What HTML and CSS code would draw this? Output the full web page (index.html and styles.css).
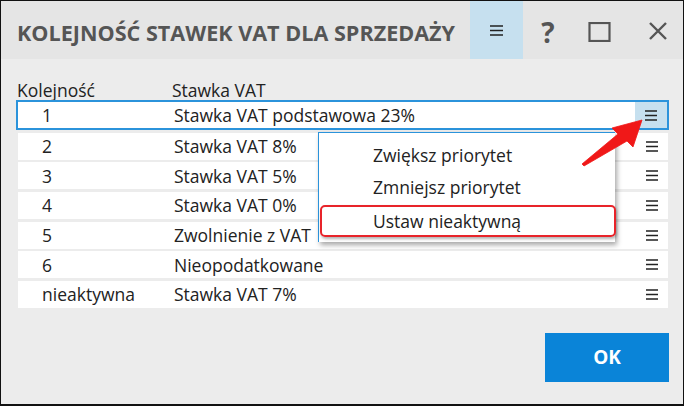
FILE: index.html
```html
<!DOCTYPE html>
<html lang="pl">
<head>
<meta charset="utf-8">
<link rel="stylesheet" href="styles.css">
</head>
<body>
<div class="window">
  <div class="titlebar">
    <div class="title">KOLEJNOŚĆ STAWEK VAT DLA SPRZEDAŻY</div>
    <div class="tb-btn tb-menu">
      <svg width="13" height="11" viewBox="0 0 13 11"><path d="M0 1h13M0 5.5h13M0 10h13" stroke="#222" stroke-width="1.6"/></svg>
    </div>
    <div class="tb-btn tb-help">?</div>
    <div class="tb-btn tb-max">
      <svg width="24" height="20" viewBox="0 0 24 20"><rect x="1.5" y="1" width="20" height="18" fill="none" stroke="#555" stroke-width="2.2"/></svg>
    </div>
    <div class="tb-btn tb-close">
      <svg width="20" height="18" viewBox="0 0 20 18"><path d="M2 1L18 17M18 1L2 17" stroke="#555" stroke-width="2.4"/></svg>
    </div>
  </div>
  <div class="content">
    <div class="thead">
      <div class="c-order">Kolejność</div>
      <div class="c-rate">Stawka VAT</div>
    </div>
    <div class="rows">
      <div class="row selected"><div class="c-num">1</div><div class="c-name">Stawka VAT podstawowa 23%</div><div class="c-menu active"><svg class="ham" width="12" height="11" viewBox="0 0 12 11"><path d="M0 1h12M0 5.5h12M0 10h12" stroke="#222" stroke-width="1.7"/></svg></div></div>
      <div class="row"><div class="c-num">2</div><div class="c-name">Stawka VAT 8%</div><div class="c-menu"><svg class="ham" width="12" height="11" viewBox="0 0 12 11"><path d="M0 1h12M0 5.5h12M0 10h12" stroke="#222" stroke-width="1.7"/></svg></div></div>
      <div class="row"><div class="c-num">3</div><div class="c-name">Stawka VAT 5%</div><div class="c-menu"><svg class="ham" width="12" height="11" viewBox="0 0 12 11"><path d="M0 1h12M0 5.5h12M0 10h12" stroke="#222" stroke-width="1.7"/></svg></div></div>
      <div class="row"><div class="c-num">4</div><div class="c-name">Stawka VAT 0%</div><div class="c-menu"><svg class="ham" width="12" height="11" viewBox="0 0 12 11"><path d="M0 1h12M0 5.5h12M0 10h12" stroke="#222" stroke-width="1.7"/></svg></div></div>
      <div class="row"><div class="c-num">5</div><div class="c-name">Zwolnienie z VAT</div><div class="c-menu"><svg class="ham" width="12" height="11" viewBox="0 0 12 11"><path d="M0 1h12M0 5.5h12M0 10h12" stroke="#222" stroke-width="1.7"/></svg></div></div>
      <div class="row"><div class="c-num">6</div><div class="c-name">Nieopodatkowane</div><div class="c-menu"><svg class="ham" width="12" height="11" viewBox="0 0 12 11"><path d="M0 1h12M0 5.5h12M0 10h12" stroke="#222" stroke-width="1.7"/></svg></div></div>
      <div class="row"><div class="c-num">nieaktywna</div><div class="c-name">Stawka VAT 7%</div><div class="c-menu"><svg class="ham" width="12" height="11" viewBox="0 0 12 11"><path d="M0 1h12M0 5.5h12M0 10h12" stroke="#222" stroke-width="1.7"/></svg></div></div>
    </div>
    <div class="footer">
      <button class="ok">OK</button>
    </div>

    <div class="ctx">
      <div class="ctx-item">Zwiększ priorytet</div>
      <div class="ctx-item">Zmniejsz priorytet</div>
      <div class="ctx-item marked">Ustaw nieaktywną</div>
    </div>

    <svg class="arrow" width="66" height="58" viewBox="0 0 66 58">
      <path d="M2 53 L38 23 L32 17 L62 9 L53 36 L47 30 L4 55 Z" fill="#f01818" stroke="#f01818" stroke-width="0.8" stroke-linejoin="round"/>
    </svg>
  </div>
</div>
</body>
</html>
```

FILE: styles.css
```css
* { box-sizing: border-box; }
html, body { margin: 0; padding: 0; }
body {
  width: 684px;
  height: 406px;
  font-family: "Open Sans", "Noto Sans", sans-serif;
  color: #222;
  background: #fff;
}
.window {
  width: 684px;
  height: 406px;
  border: 1px solid #111;
  border-bottom-width: 2px;
  background: #ececec;
  display: flex;
  flex-direction: column;
}
.titlebar {
  height: 58px;
  background: #e5e5e5;
  display: flex;
  align-items: stretch;
}
.title {
  flex: 1;
  padding-left: 16px;
  display: flex;
  align-items: center;
  padding-top: 5px;
  font-weight: 700;
  font-size: 21.6px;
  color: #555;
  white-space: nowrap;
}
.tb-btn {
  display: flex;
  align-items: center;
  justify-content: center;
  color: #555;
}
.tb-menu { width: 53px; background: #c6e0ef; }
.tb-help { width: 50px; font-size: 28px; font-weight: 700; color: #555; padding-top: 4px; }
.tb-max { width: 55px; padding-top: 4px; padding-right: 2px; }
.tb-close { width: 55px; padding-left: 5px; padding-top: 2px; }
.content {
  flex: 1;
  position: relative;
  padding: 13px 14px 0 15px;
}
.thead {
  display: flex;
  height: 28px;
  align-items: flex-end;
  line-height: 20px;
  font-size: 17.5px;
  color: #222;
}
.thead .c-order { width: 156px; padding-left: 1px; }
.rows {
  display: flex;
  flex-direction: column;
  gap: 2.67px;
}
.row {
  height: 27px;
  background: #fff;
  display: flex;
  align-items: center;
  font-size: 17.5px;
  margin-left: 2px;
  margin-right: 1px;
}
.row.selected {
  height: 30px;
  margin: 0;
  border: 2px solid #2b93db;
}
.c-num { width: 156px; padding-left: 24px; }
.c-name { flex: 1; white-space: nowrap; }
.c-menu {
  width: 32px;
  align-self: stretch;
  display: flex;
  align-items: center;
  justify-content: center;
}
.c-menu.active { background: #c6e0ef; }
.ham { display: block; }
.footer {
  display: flex;
  justify-content: flex-end;
  padding-top: 25px;
}
.ok {
  width: 124px;
  height: 49px;
  border: none;
  background: #0a84d8;
  color: #fff;
  font-family: "Open Sans", sans-serif;
  font-weight: 700;
  font-size: 19px;
}
.ctx {
  position: absolute;
  left: 317px;
  top: 73px;
  width: 297px;
  height: 110px;
  background: #fff;
  border-left: 1px solid #2b93db;
  border-top: 1px solid #2b93db;
  box-shadow: 2px 3px 5px rgba(0,0,0,0.35);
  padding-top: 6px;
}
.ctx-item {
  height: 32px;
  display: flex;
  align-items: center;
  padding-left: 54px;
  font-size: 17.5px;
}
.ctx-item.marked {
  margin: 2px -1px 0 1px;
  border: 2px solid #e8242a;
  border-radius: 5px;
  padding-left: 51px;
  box-shadow: 1px 2px 3px rgba(0,0,0,0.3);
}
.arrow {
  position: absolute;
  left: 579px;
  top: 52px;
}
```
